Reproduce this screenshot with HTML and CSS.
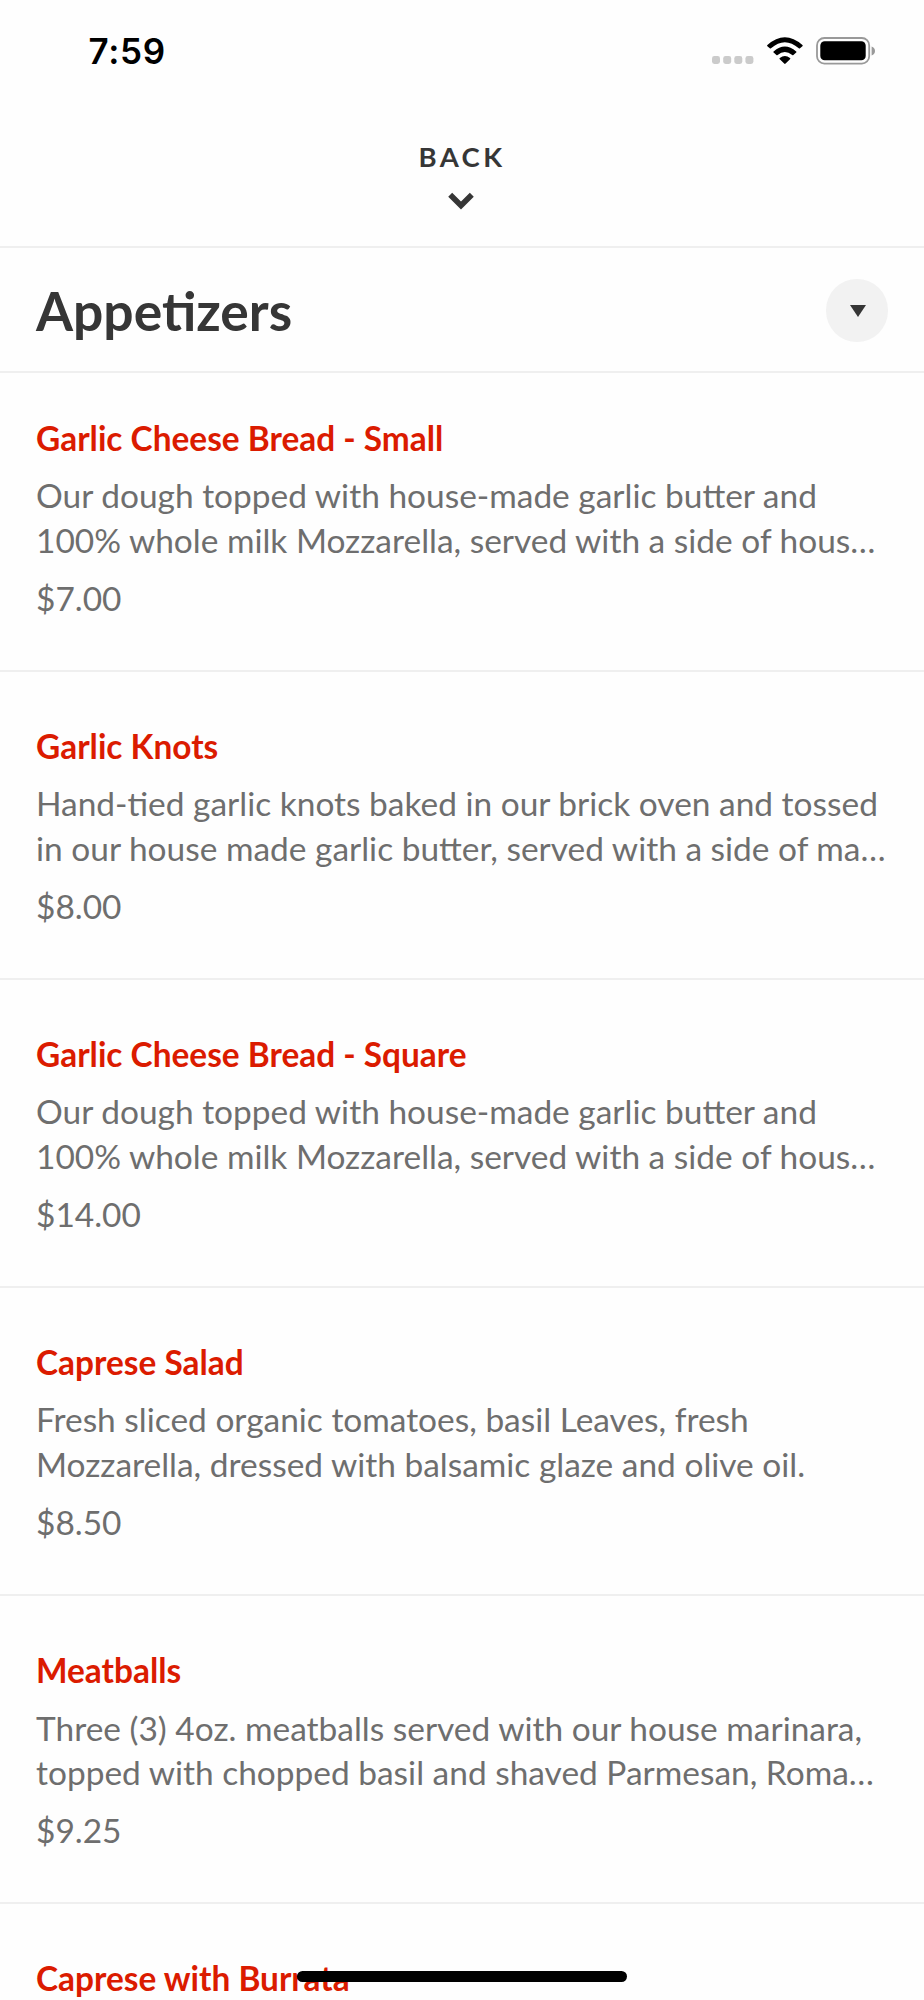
FILE: index.html
```html
<!DOCTYPE html>
<html lang="en">
<head>
<meta charset="utf-8">
<title>Appetizers</title>
<link rel="stylesheet" href="styles.css">
</head>
<body>
<div class="screen">
  <header class="status">
    <span class="time">7:59</span>
    <div class="indicators">
      <svg class="cell" width="42" height="8" viewBox="0 0 42 8" fill="#cbcbcb"><rect width="8" height="8" rx="2.4"/><rect x="11.2" width="8" height="8" rx="2.4"/><rect x="22.3" width="8" height="8" rx="2.4"/><rect x="33.4" width="8" height="8" rx="2.4"/></svg>
      <svg class="wifi" width="36" height="28" viewBox="0 0 36 28"><path d="M.4 8.1Q17.8-7.4 35.4 8.1Q36 8.7 35.4 9.3L33 11.3Q32.4 11.7 31.8 11.2Q17.8-.8 4 11.2Q3.4 11.7 2.8 11.3L.4 9.3Q-.2 8.7 .4 8.1ZM6.6 14.4Q17.8 4.6 29.2 14.4Q29.8 15 29.2 15.6L26.4 18Q25.8 18.5 25.2 18Q17.8 11.9 10.6 18Q10 18.5 9.4 18L6.6 15.6Q6 15 6.6 14.4ZM12.8 21.1Q17.9 17 23 21.1Q23.6 21.6 23 22.2L18.6 26.6Q17.9 27.2 17.2 26.6L12.8 22.2Q12.2 21.6 12.8 21.1Z"/></svg>
      <svg class="battery" width="60" height="28" viewBox="0 0 60 28"><rect x="1" y="1" width="52.2" height="25.6" rx="7.4" fill="none" stroke="#999" stroke-width="1.8"/><rect x="4.3" y="4.3" width="45.4" height="19" rx="4.4"/><path d="M55.6 9.4Q59 10.5 59 13.9T55.6 18.4Z" fill="#999"/></svg>
    </div>
  </header>
  <nav class="back">
    <span>BACK</span>
    <svg width="26" height="18" viewBox="0 0 26 18"><path d="M2.2 2.8L13 13.6L23.8 2.8" fill="none" stroke="#363636" stroke-width="5.6"/></svg>
  </nav>
  <div class="category">
    <h1>Appetizers</h1>
    <button class="toggle" aria-label="Categories"><svg width="16" height="12" viewBox="0 0 16 12"><path d="M0 0H16L8 12Z" fill="#363636"/></svg></button>
  </div>
  <main class="menu">
    <article class="item"><h2>Garlic Cheese Bread - Small</h2><p>Our dough topped with house-made garlic butter and<br>100% whole milk Mozzarella, served with a side of hous…</p><div class="price">$7.00</div></article>
    <article class="item"><h2>Garlic Knots</h2><p>Hand-tied garlic knots baked in our brick oven and tossed<br>in our house made garlic butter, served with a side of ma…</p><div class="price">$8.00</div></article>
    <article class="item"><h2>Garlic Cheese Bread - Square</h2><p>Our dough topped with house-made garlic butter and<br>100% whole milk Mozzarella, served with a side of hous…</p><div class="price">$14.00</div></article>
    <article class="item"><h2>Caprese Salad</h2><p>Fresh sliced organic tomatoes, basil Leaves, fresh<br>Mozzarella, dressed with balsamic glaze and olive oil.</p><div class="price">$8.50</div></article>
    <article class="item"><h2>Meatballs</h2><p>Three (3) 4oz. meatballs served with our house marinara,<br>topped with chopped basil and shaved Parmesan, Roma…</p><div class="price">$9.25</div></article>
    <article class="item"><h2>Caprese with Burrata</h2></article>
  </main>
  <div class="home-indicator"></div>
</div>
</body>
</html>
```

FILE: styles.css
```css
* { box-sizing: border-box; }
body { margin: 0; background: #fefefe; }
.screen {
  position: relative;
  width: 924px;
  height: 2000px;
  overflow: hidden;
  font-family: Lato, sans-serif;
  color: #363636;
}
.status {
  height: 100px;
  display: flex;
  justify-content: space-between;
  padding: 0 48px 0 88.5px;
  color: #000;
}
.time {
  font: 600 35px/102px Inter, sans-serif;
  letter-spacing: 0.7px;
}
.indicators { display: flex; align-items: flex-start; padding-top: 36.5px; }
.cell { margin: 19.5px 13px 0 0; }
.wifi { margin-right: 13px; }
.back {
  height: 148px;
  display: flex;
  flex-direction: column;
  align-items: center;
  padding-top: 38px;
  border-bottom: 2px solid #efefef;
}
.back span {
  font-size: 27.5px;
  line-height: 38px;
  font-weight: 700;
  letter-spacing: 3.4px;
}
.back svg { margin: 16px 3px 0 0; }
.category {
  height: 125px;
  display: flex;
  align-items: center;
  justify-content: space-between;
  padding: 0 36px;
  border-bottom: 2px solid #efefef;
}
h1 { margin: 1px 0 0; font-size: 53.4px; line-height: 64px; font-weight: 700; }
.toggle {
  width: 62.5px;
  height: 62.5px;
  margin-top: 2px;
  padding: 0 0 0 2px;
  border: 0;
  border-radius: 50%;
  background: #f2f2f2;
  display: flex;
  align-items: center;
  justify-content: center;
}
.item {
  height: 308.1px;
  padding: 51.6px 36px 0;
  border-bottom: 2px solid #efefef;
  font-size: 33.46px;
  line-height: 44.7px;
  color: #6e6e6e;
  white-space: nowrap;
}
.item:first-child { height: 299px; padding-top: 42.6px; }
h2 {
  margin: 0 0 13px;
  font-size: 33.4px;
  line-height: 44.7px;
  font-weight: 700;
  color: #db1b00;
}
.item p { margin: 0 0 13px; }
.home-indicator {
  position: absolute;
  left: 297px;
  top: 1971px;
  width: 330px;
  height: 11px;
  border-radius: 6px;
  background: #000;
}
```
